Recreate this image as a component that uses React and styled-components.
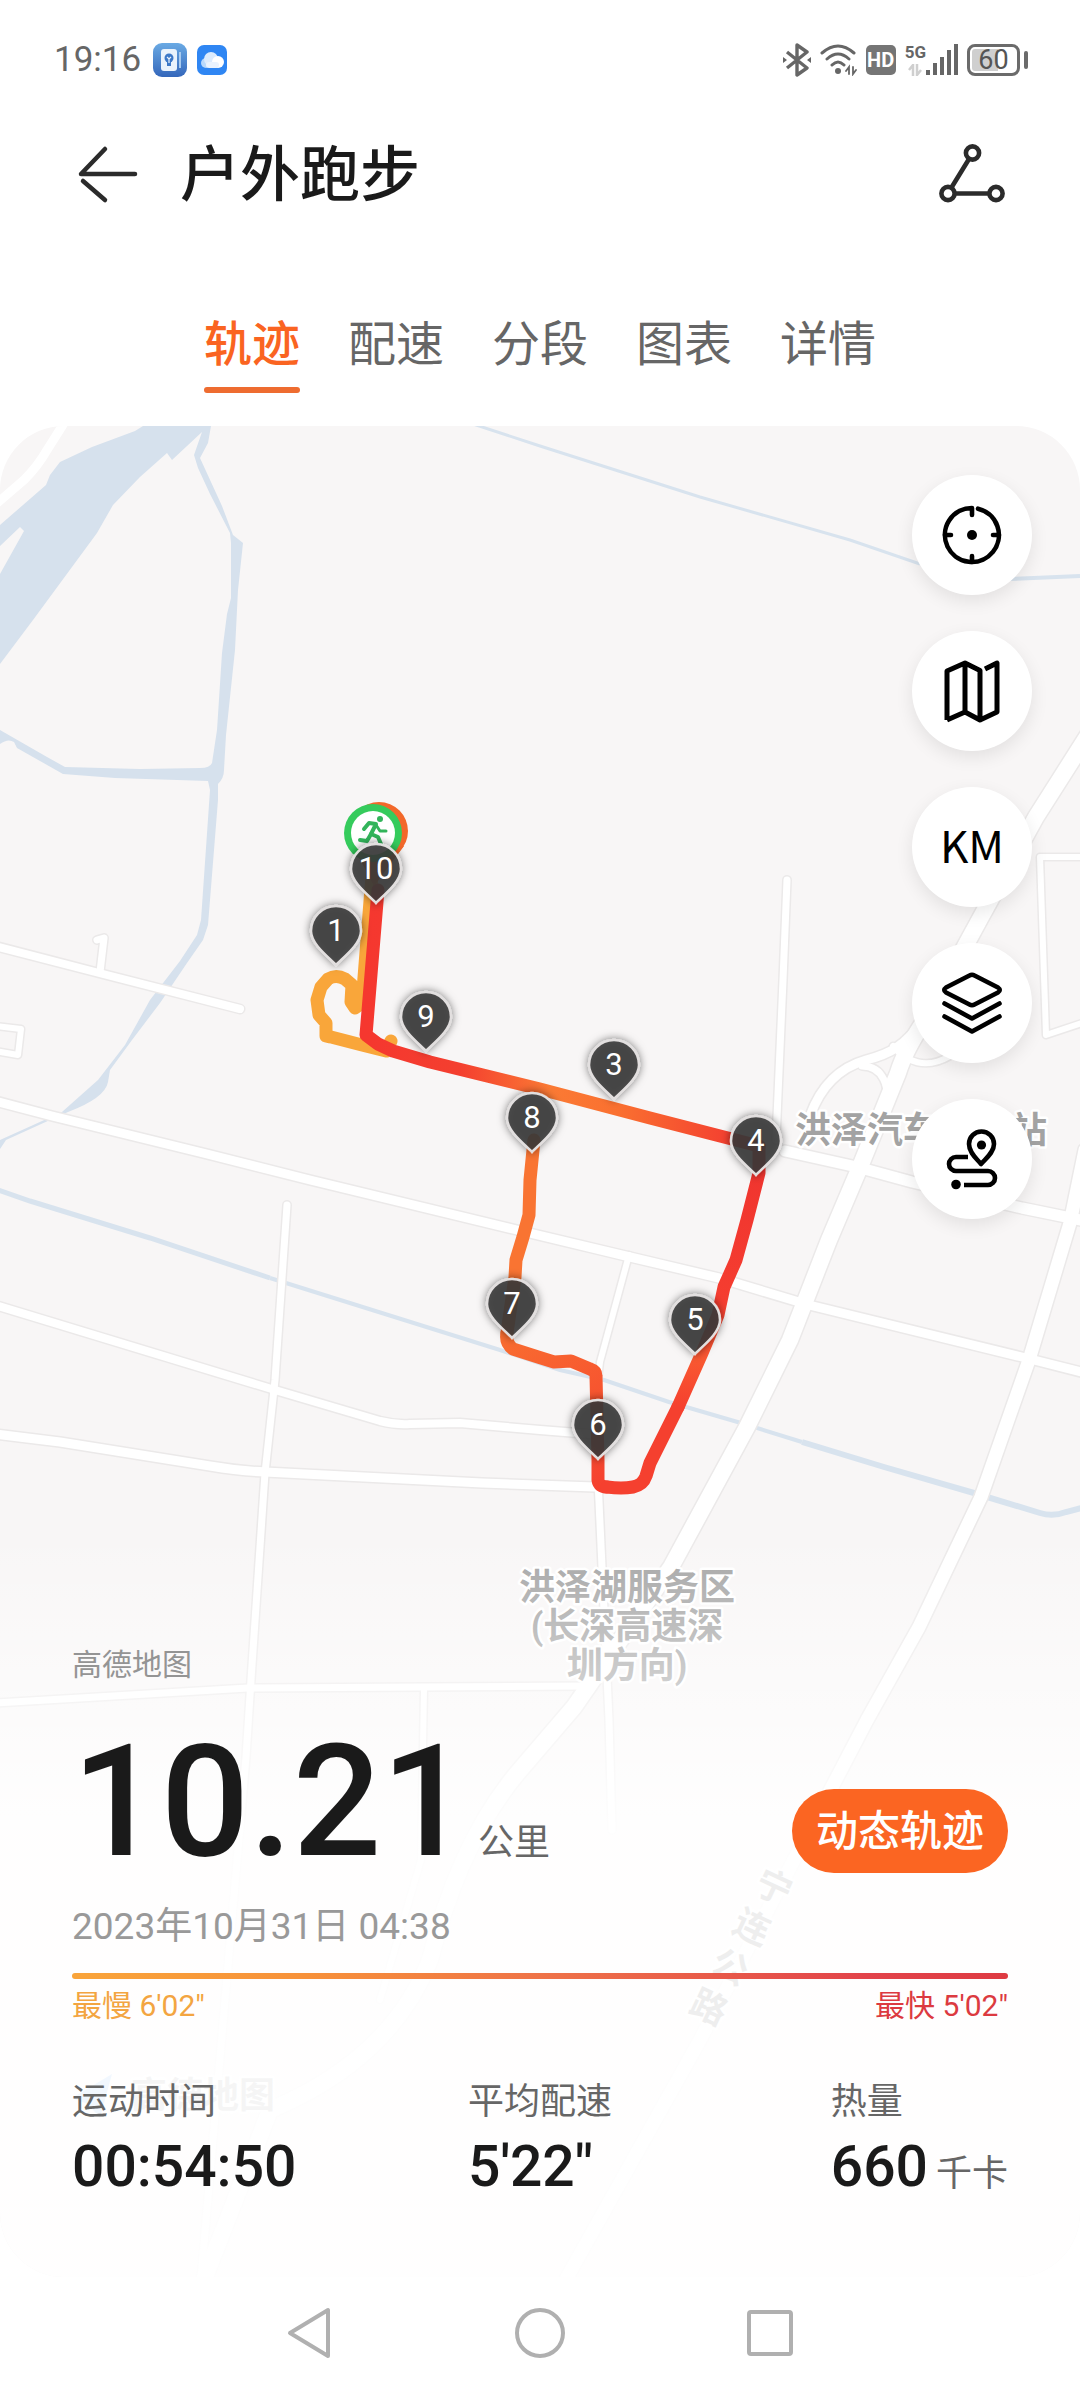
import React, { useState } from "react";
import styled, { createGlobalStyle } from "styled-components";

const Global = createGlobalStyle`
  * { box-sizing: border-box; }
  body {
    margin: 0;
    background: #fff;
    color: #1a1a1a;
    font-family: Roboto, "Noto Sans CJK SC", sans-serif;
  }
  button {
    margin: 0;
    padding: 0;
    border: 0;
    background: none;
    color: inherit;
    font: inherit;
    cursor: pointer;
  }
  svg { display: block; }
`;

const Page = styled.div`
  display: flex;
  flex-direction: column;
  min-height: 100vh;
`;

/* ---------- status bar ---------- */

const StatusBar = styled.div`
  display: flex;
  align-items: center;
  justify-content: space-between;
  height: 118px;
  padding: 2px 52px 0 54px;
  color: #666;
`;

const StatusGroup = styled.div`
  display: flex;
  align-items: center;
  gap: ${(p) => p.$gap}px;
`;

const Clock = styled.time`
  margin-right: 2px;
  font-size: 35px;
  line-height: 40px;
`;

const HdBadge = styled.span`
  width: 30px;
  height: 30px;
  border-radius: 5px;
  background: #757575;
  color: #fff;
  font-size: 20px;
  font-weight: 700;
  line-height: 30px;
  text-align: center;
`;

const Network = styled.div`
  display: flex;
  align-items: flex-end;
  height: 32px;
`;

const NetworkType = styled.div`
  display: flex;
  flex-direction: column;
  align-items: center;
  gap: 4px;
  font-size: 17px;
  font-weight: 700;
  line-height: 16px;
`;

const Battery = styled.div`
  display: flex;
  align-items: center;
  gap: 4px;
`;

const BatteryBody = styled.span`
  width: 53px;
  height: 32px;
  border: 3px solid #6b6b6b;
  border-radius: 8px;
  padding: 2px;
`;

const BatteryLevel = styled.span`
  display: block;
  height: 22px;
  border-radius: 3px;
  background: linear-gradient(to right, #cfcfcf 60%, transparent 60%);
  color: #555;
  font-size: 27px;
  line-height: 22px;
  text-align: center;
`;

const BatteryTip = styled.span`
  width: 4px;
  height: 18px;
  border-radius: 2px;
  background: #6b6b6b;
`;

/* ---------- header ---------- */

const Header = styled.header`
  display: flex;
  align-items: center;
  height: 112px;
  padding: 0 72px;
`;

const IconButton = styled.button`
  width: 72px;
  height: 72px;
`;

const Title = styled.h1`
  flex: 1;
  margin: 0;
  padding: 4px 0 0 36px;
  font-size: 60px;
  font-weight: 500;
  line-height: 80px;
`;

const Tabs = styled.div`
  display: flex;
  justify-content: center;
  gap: 48px;
  padding: 79px 48px 33px;
`;

const Tab = styled.button`
  padding-bottom: 6px;
  border-bottom: 6px solid transparent;
  font-size: 48px;
  line-height: 72px;
  color: #666;
  position: relative;

  &[aria-selected="true"] {
    color: #fa6421;
    font-weight: 500;
  }

  &[aria-selected="true"]::after {
    content: "";
    position: absolute;
    left: 0;
    right: 0;
    bottom: -6px;
    height: 6px;
    border-radius: 3px;
    background: #ee6c30;
  }
`;

/* ---------- map panel ---------- */

const Panel = styled.main`
  position: relative;
  display: flex;
  flex: 1;
  flex-direction: column;
  border-radius: 64px;
  overflow: hidden;
  background: #f8f6f6;
`;

const MapCanvas = styled.svg`
  position: absolute;
  inset: 0;
  width: 100%;
  height: 100%;
  font-family: Roboto, "Noto Sans CJK SC", sans-serif;
`;

const Tools = styled.div`
  position: relative;
  display: flex;
  flex-direction: column;
  align-self: flex-end;
  gap: 36px;
  padding: 49px 48px 0;
`;

const ToolButton = styled.button`
  display: grid;
  place-items: center;
  width: 120px;
  height: 120px;
  border-radius: 50%;
  background: #fff;
  box-shadow: 0 6px 18px rgba(0, 0, 0, 0.09);
  color: #000;
`;

const ToolText = styled.span`
  padding-bottom: 6px;
  font-family: "Noto Sans CJK SC", sans-serif;
  font-size: 44px;
  line-height: 60px;
`;

const Summary = styled.section`
  position: relative;
  display: flex;
  flex-direction: column;
  margin-top: auto;
  padding: 0 72px 78px;
`;

const MapSource = styled.p`
  margin: 0;
  color: #949494;
  font-size: 30px;
  line-height: 40px;
`;

const DistanceRow = styled.div`
  display: flex;
  align-items: flex-end;
  justify-content: space-between;
  margin-top: 46px;
`;

const Distance = styled.p`
  margin: 0;
  font-size: 156px;
  font-weight: 500;
  line-height: 142px;
`;

const Unit = styled.span`
  margin-left: 8px;
  color: #666;
  font-size: 36px;
  font-weight: 400;
  line-height: 36px;
`;

const PlayButton = styled.button`
  height: 84px;
  padding: 2px 24px 0;
  border-radius: 42px;
  background: #fb6522;
  color: #fff;
  font-size: 42px;
  font-weight: 500;
  line-height: 82px;
`;

const DateLine = styled.time`
  margin-top: 30px;
  color: #999;
  font-size: 37px;
  line-height: 48px;
`;

const PaceBar = styled.div`
  height: 6px;
  margin-top: 22px;
  border-radius: 3px;
  background: linear-gradient(to right, #f9a43a, #f79139 25%, #ee7048 52%, #e2434a 85%, #de3a42);
`;

const PaceLabels = styled.div`
  display: flex;
  justify-content: space-between;
  margin-top: 8px;
  font-size: 30px;
  line-height: 38px;
`;

const PaceLabel = styled.span`
  color: ${(p) => p.$color};
`;

const Stats = styled.dl`
  display: grid;
  grid-template-columns: 1fr auto 1fr;
  margin: 55px 0 0;
`;

const Stat = styled.div`
  display: flex;
  flex-direction: column;
  gap: 11px;

  &:last-child { justify-self: end; }
`;

const StatName = styled.dt`
  color: #666;
  font-size: 36px;
  line-height: 44px;
`;

const StatValue = styled.dd`
  margin: 0;
  font-size: 57px;
  font-weight: 500;
  line-height: 64px;
`;

/* ---------- system navigation ---------- */

const NavBar = styled.nav`
  display: flex;
  align-items: center;
  justify-content: center;
  gap: 150px;
  height: 111px;
`;

const NavButton = styled.button`
  display: grid;
  place-items: center;
  width: 80px;
  height: 80px;
`;

/* ---------- map data ---------- */

const roads = [
  { w: 8, d: "M-5 946L103 974L240 1009" },
  { w: 7, d: "M100 972L104 938L97 940" },
  { w: 6, d: "M-5 1026L21 1029L18 1055L-5 1051" },
  { w: 9, d: "M-5 1101L52 1116L207 1154L310 1180L517 1230L630 1257L719 1278L809 1305L1022 1357L1085 1373" },
  { w: 8, d: "M-5 1305L275 1390L380 1421Q396 1425 410 1424L460 1423L540 1430L590 1434" },
  { w: 9, d: "M-5 1434L60 1442L210 1466Q240 1471 265 1472L482 1483L595 1487" },
  { w: 7, d: "M287 1205L275 1380L265 1473L251 1680L246 1757L225 2000L200 2290" },
  { w: 7, d: "M-5 1703L248 1688L590 1686" },
  { w: 6, d: "M424 1688L421 1860L380 2000" },
  { w: 7, d: "M787 880L783 980L776 1140" },
  { w: 11, d: "M785 1151L857 1167L912 1182L1022 1208L1085 1221" },
  { w: 6, d: "M1085 857L1040 857L1046 1035L1085 1022" },
  { w: 6, d: "M629 1255L600 1362L598 1380" },
  { w: 7, d: "M598 1480L602 1567L609 1720L612 1830" },
  { w: 9, d: "M810 1116C820 1088 838 1068 866 1060C890 1054 905 1046 925 1018" },
  { w: 7, d: "M862 1066C882 1066 892 1084 886 1120" },
  { w: 6, d: "M893 1046C906 1062 926 1070 950 1056" },
  { w: 16, d: "M1090 732L1036 817L981 917L925 1020Q905 1050 898 1073L860 1167L829 1240L790 1340L747 1427L671 1567L574 1707L520 1770Q460 1840 430 1960Q390 2060 270 2110L200 2290" },
  { w: 13, d: "M1085 1150L1070 1223L1029 1360L981 1497L919 1627L867 1720L820 1810L700 2040L560 2290" },
];

const water =
  "M143 426L135 431L92 447L60 462L50 475L46 485L0 525V546L20 527L24 531L0 574V664L33 620L97 533L113 505L140 477L167 453L172 460L202 432L194 455L198 468L210 494L230 533L231 543V598L227 614L222 653L217 730L212 763Q210 768 200 768L140 769L65 767L47 757L0 730V744Q8 738 14 742L17 748L63 774L115 778L208 781L210 790L201 920L197 935L180 961L150 1000L125 1045L98 1080L62 1112L0 1140V1149L6 1140L50 1120L68 1112Q105 1098 108 1082L110 1070L132 1040L160 1003L187 963L203 940L208 925L218 800V784Q224 778 224 770L226 735L235 650L238 590L243 543L233 535L222 506L200 458L208 443L211 426Z";

const streams = [
  { w: 3, d: "M473 424L540 446L700 497L850 540L920 564" },
  { w: 4, d: "M1010 579L1080 576" },
  { w: 5, d: "M-5 1189L30 1201L150 1238L270 1278" },
  { w: 4, d: "M270 1278L500 1350L560 1370L604 1380L669 1402L741 1423L802 1442" },
  { w: 6, d: "M802 1442L884 1467L974 1493L1040 1513Q1053 1517 1066 1512L1085 1507" },
];

const track = [
  { c: "#f9a63a", d: "M374 850L362 1003L355 1008L351 1002L352 985L345 979Q336 974 328 979L321 987L317 1000L319 1015L326 1023V1036Q330 1037 331 1037L362 1045L386 1051L391 1041" },
  { c: "#f97432", d: "M534 1140L530 1180L529 1215L523 1237L516 1260L515 1277L507 1333" },
  { c: "url(#lowerTurn)", d: "M507 1333Q505 1343 513 1349L538 1357L554 1362L571 1361L590 1369Q596 1371 596 1376L598 1460V1480Q599 1487 607 1487" },
  { c: "#f5402f", d: "M607 1487Q622 1489 633 1487Q643 1485 646 1476L650 1463L678 1407" },
  { c: "url(#eastSide)", d: "M678 1407L702 1353L718 1315L724 1287L736 1260L747 1220L759 1173V1146" },
  { c: "url(#northRoad)", d: "M378 890L366 1035L378 1044L393 1051L430 1062L540 1089L650 1118L759 1146" },
];

const pins = [
  { n: 3, x: 614, y: 1099 },
  { n: 8, x: 532, y: 1152 },
  { n: 4, x: 756, y: 1175 },
  { n: 5, x: 695, y: 1354 },
  { n: 7, x: 512, y: 1338 },
  { n: 6, x: 598, y: 1459 },
  { n: 9, x: 426, y: 1051 },
  { n: 1, x: 336, y: 965 },
  { n: 10, x: 376, y: 903 },
];

const roadName = [
  { t: "宁", x: 774, y: 1887 },
  { t: "连", x: 752, y: 1927 },
  { t: "公", x: 730, y: 1967 },
  { t: "路", x: 709, y: 2007 },
];

const PlaceName = styled.text`
  fill: ${(p) => p.$color || "#a3a3a3"};
  stroke: #fff;
  stroke-width: 5px;
  stroke-linejoin: round;
  paint-order: stroke;
  font-size: 36px;
  font-weight: 700;
  text-anchor: middle;
`;

const PinNumber = styled.text`
  fill: #fff;
  font-size: 31px;
  text-anchor: middle;
`;

function Pin({ n, x, y }) {
  return (
    <g transform={`translate(${x} ${y})`}>
      <path
        d="M0 0C-5 -6 -25 -20 -25 -34A25 25 0 0 1 25 -34C25 -20 5 -6 0 0Z"
        fill="#383838"
        fillOpacity="0.86"
        stroke="#e2dfdf"
        strokeWidth="2.5"
        filter="url(#pinShadow)"
      />
      <PinNumber y="-24">{n}</PinNumber>
    </g>
  );
}

function RunMap() {
  return (
    <MapCanvas viewBox="0 426 1080 1851" preserveAspectRatio="xMidYMin slice" role="img" aria-label="跑步轨迹地图">
      <defs>
        <linearGradient id="northRoad" gradientUnits="userSpaceOnUse" x1="366" y1="0" x2="759" y2="0">
          <stop offset="0" stopColor="#f5372f" />
          <stop offset="0.24" stopColor="#f43f2f" />
          <stop offset="0.47" stopColor="#fb7a34" />
          <stop offset="0.64" stopColor="#fa7030" />
          <stop offset="0.95" stopColor="#f33c30" />
          <stop offset="1" stopColor="#f0352f" />
        </linearGradient>
        <linearGradient id="eastSide" gradientUnits="userSpaceOnUse" x1="0" y1="1173" x2="0" y2="1407">
          <stop offset="0" stopColor="#f0352f" />
          <stop offset="0.55" stopColor="#f53d30" />
          <stop offset="0.8" stopColor="#f95831" />
          <stop offset="1" stopColor="#f5402f" />
        </linearGradient>
        <linearGradient id="lowerTurn" gradientUnits="userSpaceOnUse" x1="507" y1="1333" x2="607" y2="1487">
          <stop offset="0" stopColor="#f96d30" />
          <stop offset="1" stopColor="#f5402f" />
        </linearGradient>
        <linearGradient id="fade" gradientUnits="userSpaceOnUse" x1="0" y1="1530" x2="0" y2="1830">
          <stop offset="0" stopColor="#fff" stopOpacity="0" />
          <stop offset="0.45" stopColor="#fff" stopOpacity="0.42" />
          <stop offset="1" stopColor="#fff" stopOpacity="0.93" />
        </linearGradient>
        <filter id="pinShadow" x="-40%" y="-40%" width="180%" height="180%">
          <feDropShadow dx="0" dy="0" stdDeviation="4" floodColor="#000" floodOpacity="0.55" />
        </filter>
      </defs>

      <path d={water} fill="#d6e1ed" />
      <g fill="none" stroke="#d8e3ee">
        {streams.map((s) => <path key={s.d} d={s.d} strokeWidth={s.w} />)}
      </g>
      <path d="M-4 504L24 480Q38 466 47 450L66 420" fill="none" stroke="#fff" strokeWidth="9" />
      <g fill="none" stroke="#ebe9e9" strokeLinecap="round" strokeLinejoin="round">
        {roads.map((r) => <path key={r.d} d={r.d} strokeWidth={r.w + 3} />)}
      </g>
      <g fill="none" stroke="#fff" strokeLinecap="round" strokeLinejoin="round">
        {roads.map((r) => <path key={r.d} d={r.d} strokeWidth={r.w} />)}
      </g>

      <PlaceName x="921" y="1143">洪泽汽车客运站</PlaceName>
      <PlaceName x="627" y="1600">洪泽湖服务区</PlaceName>
      <PlaceName x="627" y="1639">(长深高速深</PlaceName>
      <PlaceName x="627" y="1678">圳方向)</PlaceName>
      {roadName.map((c) => (
        <PlaceName key={c.t} $color="#111" y="13" transform={`translate(${c.x} ${c.y}) rotate(25)`}>{c.t}</PlaceName>
      ))}
      <path d="M72 2098L112 2074L100 2118L88 2104Z" fill="#3b93f0" />
      <PlaceName x="203" y="2108" $color="#777">高德地图</PlaceName>

      <rect x="0" y="1530" width="1080" height="760" fill="url(#fade)" />

      <g fill="none" strokeWidth="13" strokeLinecap="round" strokeLinejoin="round">
        {track.map((t) => <path key={t.d} d={t.d} stroke={t.c} />)}
      </g>

      <circle cx="379" cy="831" r="29" fill="#f2682a" />
      <path d="M354 848L374 886L404 846Z" fill="#f2682a" />
      <circle cx="373" cy="833" r="29" fill="#35cb5c" />
      <circle cx="373" cy="833" r="22" fill="#fff" />
      <g transform="translate(373 833)" fill="none" stroke="#32b45a" strokeWidth="4" strokeLinecap="round" strokeLinejoin="round">
        <circle cx="7" cy="-14" r="3" fill="#32b45a" stroke="none" />
        <path d="M-9 -4L-4 -10L3 -9L-2 1L5 4L8 11" />
        <path d="M3 -8L7 -2L13 -2" strokeWidth="3" />
        <path d="M-2 1L-6 8L-13 7" />
      </g>

      {pins.map((p) => <Pin key={p.n} {...p} />)}
    </MapCanvas>
  );
}

/* ---------- icons ---------- */

function ToolIcon({ children }) {
  return (
    <svg width="72" height="72" viewBox="0 0 72 72" fill="none" stroke="currentColor" strokeWidth="4.6" strokeLinecap="round" strokeLinejoin="round" aria-hidden="true">
      {children}
    </svg>
  );
}

const tools = [
  {
    label: "定位",
    icon: (
      <ToolIcon>
        <path d="M36 16V9A27 27 0 1 0 42 9.7" />
        <path d="M9 36H15M57 36H63M36 57V63" />
        <circle cx="36" cy="36" r="5" fill="currentColor" stroke="none" />
      </ToolIcon>
    ),
  },
  {
    label: "地图类型",
    icon: (
      <ToolIcon>
        <path d="M11 65V16L29 8V57L11 65M29 8L44 15.5V65L29 57M49 14L61 8V57L44 65" strokeLinecap="butt" strokeWidth="5" />
      </ToolIcon>
    ),
  },
  { label: "公里标记", icon: <ToolText>KM</ToolText> },
  {
    label: "图层",
    icon: (
      <ToolIcon>
        <path d="M33.500 8.500Q36 7 38.500 8.500L62 20.500Q65.500 23 62 25.500L38.500 37.500Q36 39 33.500 37.500L10 25.500Q6.500 23 10 20.500Z" />
        <path d="M8.500 36.500L36 51.500L63.500 36.500M8.500 49.500L36 64.500L63.500 49.500" />
      </ToolIcon>
    ),
  },
  {
    label: "路线",
    icon: (
      <ToolIcon>
        <path d="M45 41C41 36 33 30 33 21A12 12 0 0 1 58 21C58 30 49 36 45 41Z" />
        <circle cx="45.500" cy="22" r="4.600" fill="currentColor" stroke="none" />
        <path d="M32 34H20A7 7 0 0 0 20 48H52A7 7 0 0 1 52 62H28" strokeLinecap="butt" />
        <circle cx="20" cy="61.500" r="4.800" fill="currentColor" stroke="none" />
      </ToolIcon>
    ),
  },
];

function NotebookIcon() {
  return (
    <svg width="34" height="34" viewBox="0 0 34 34" aria-hidden="true">
      <defs>
        <linearGradient id="notebook" x1="0" y1="0" x2="0" y2="1">
          <stop offset="0" stopColor="#6aaae4" />
          <stop offset="1" stopColor="#3467bb" />
        </linearGradient>
      </defs>
      <rect width="34" height="34" rx="9" fill="url(#notebook)" />
      <rect x="8" y="6" width="16" height="22" rx="3" fill="#eaf3fc" />
      <path d="M27 9V25" stroke="#a9cbef" strokeWidth="2" />
      <circle cx="16" cy="15" r="4.500" fill="#3d79c8" />
      <path d="M14 19H18V23H14Z" fill="#3d79c8" />
      <path d="M14 14L16 16L18 14M16 16V20" stroke="#eaf3fc" strokeWidth="1.200" fill="none" />
    </svg>
  );
}

function CloudIcon() {
  return (
    <svg width="30" height="30" viewBox="0 0 30 30" aria-hidden="true">
      <rect width="30" height="30" rx="7" fill="#2f86f3" />
      <circle cx="9" cy="18" r="5" fill="#b9d9fb" />
      <circle cx="14" cy="14" r="7" fill="#dcebfd" />
      <circle cx="21" cy="17" r="6" fill="#fff" />
      <rect x="9" y="17" width="13" height="6" rx="3" fill="#eaf3fe" />
    </svg>
  );
}

function BluetoothIcon() {
  return (
    <svg width="28" height="34" viewBox="0 0 28 34" fill="none" stroke="currentColor" strokeWidth="3.400" strokeLinejoin="round" aria-hidden="true">
      <path d="M4 9L24 25L14 32V2L24 9L4 25" />
      <path d="M0 14V20L4 17ZM28 14V20L24 17Z" fill="currentColor" stroke="none" />
    </svg>
  );
}

function WifiIcon() {
  return (
    <svg width="37" height="32" viewBox="0 0 37 32" fill="none" stroke="currentColor" strokeWidth="3" strokeLinecap="round" aria-hidden="true">
      <path d="M2 9Q18 -5 34 9M7 15Q18 5 29 15M12 21Q18 15 24 21" />
      <circle cx="18" cy="27" r="3" fill="currentColor" stroke="none" />
      <path d="M29 30V23L26 27M33 23V30L36 26" strokeWidth="1.800" />
    </svg>
  );
}

function SignalIcon() {
  return (
    <svg width="32" height="32" viewBox="0 0 32 32" fill="currentColor" aria-hidden="true">
      <rect x="0" y="26" width="4" height="5" />
      <rect x="7" y="19" width="4" height="12" />
      <rect x="14" y="13" width="4" height="18" />
      <rect x="21" y="6" width="4" height="25" />
      <rect x="28" y="0" width="4" height="31" />
    </svg>
  );
}

function DataArrows() {
  return (
    <svg width="14" height="12" viewBox="0 0 14 12" fill="none" stroke="#cfcfcf" strokeWidth="2.500" aria-hidden="true">
      <path d="M5 12V1L1 6M9 0V11L13 6" />
    </svg>
  );
}

const tabNames = ["轨迹", "配速", "分段", "图表", "详情"];

export default function App() {
  const [tab, setTab] = useState("轨迹");

  return (
    <Page>
      <Global />
      <StatusBar>
        <StatusGroup $gap={10}>
          <Clock>19:16</Clock>
          <NotebookIcon />
          <CloudIcon />
        </StatusGroup>
        <StatusGroup $gap={9}>
          <BluetoothIcon />
          <WifiIcon />
          <HdBadge>HD</HdBadge>
          <Network>
            <NetworkType>
              5G
              <DataArrows />
            </NetworkType>
            <SignalIcon />
          </Network>
          <Battery>
            <BatteryBody>
              <BatteryLevel>60</BatteryLevel>
            </BatteryBody>
            <BatteryTip />
          </Battery>
        </StatusGroup>
      </StatusBar>

      <Header>
        <IconButton type="button" aria-label="返回">
          <svg width="72" height="72" viewBox="0 0 72 72" fill="none" stroke="#2b2b2b" strokeWidth="4.500" strokeLinecap="round" strokeLinejoin="round">
            <path d="M63 36H9L33 11" />
            <path d="M11 43L33 62" />
          </svg>
        </IconButton>
        <Title>户外跑步</Title>
        <IconButton type="button" aria-label="分享">
          <svg width="72" height="72" viewBox="0 0 72 72" fill="none" stroke="#2b2b2b" strokeWidth="4.600">
            <circle cx="36.500" cy="15" r="6.600" />
            <circle cx="12" cy="55.500" r="6.600" />
            <circle cx="60" cy="55.500" r="6.600" />
            <path d="M33 21L15.500 49.500M19 55.500H53" />
          </svg>
        </IconButton>
      </Header>

      <Tabs role="tablist">
        {tabNames.map((name) => (
          <Tab key={name} type="button" role="tab" aria-selected={tab === name} onClick={() => setTab(name)}>
            {name}
          </Tab>
        ))}
      </Tabs>

      <Panel>
        <RunMap />
        <Tools>
          {tools.map((t) => (
            <ToolButton key={t.label} type="button" aria-label={t.label}>{t.icon}</ToolButton>
          ))}
        </Tools>
        <Summary>
          <MapSource>高德地图</MapSource>
          <DistanceRow>
            <Distance>
              10.21<Unit>公里</Unit>
            </Distance>
            <PlayButton type="button">动态轨迹</PlayButton>
          </DistanceRow>
          <DateLine dateTime="2023-10-31T04:38">2023年10月31日 04:38</DateLine>
          <PaceBar />
          <PaceLabels>
            <PaceLabel $color="#f3a541">最慢 6'02"</PaceLabel>
            <PaceLabel $color="#dc3a40">最快 5'02"</PaceLabel>
          </PaceLabels>
          <Stats>
            <Stat>
              <StatName>运动时间</StatName>
              <StatValue>00:54:50</StatValue>
            </Stat>
            <Stat>
              <StatName>平均配速</StatName>
              <StatValue>5'22"</StatValue>
            </Stat>
            <Stat>
              <StatName>热量</StatName>
              <StatValue>
                660<Unit>千卡</Unit>
              </StatValue>
            </Stat>
          </Stats>
        </Summary>
      </Panel>

      <NavBar>
        <NavButton type="button" aria-label="返回上一页">
          <svg width="50" height="54" viewBox="0 0 50 54" fill="none" stroke="#b0b0b0" strokeWidth="4" strokeLinejoin="round">
            <path d="M5 27L43 4V50Z" />
          </svg>
        </NavButton>
        <NavButton type="button" aria-label="主屏幕">
          <svg width="50" height="50" viewBox="0 0 50 50" fill="none" stroke="#b0b0b0" strokeWidth="4">
            <circle cx="25" cy="25" r="23" />
          </svg>
        </NavButton>
        <NavButton type="button" aria-label="最近任务">
          <svg width="46" height="46" viewBox="0 0 46 46" fill="none" stroke="#b0b0b0" strokeWidth="4">
            <rect x="2" y="2" width="42" height="42" rx="2" />
          </svg>
        </NavButton>
      </NavBar>
    </Page>
  );
}
